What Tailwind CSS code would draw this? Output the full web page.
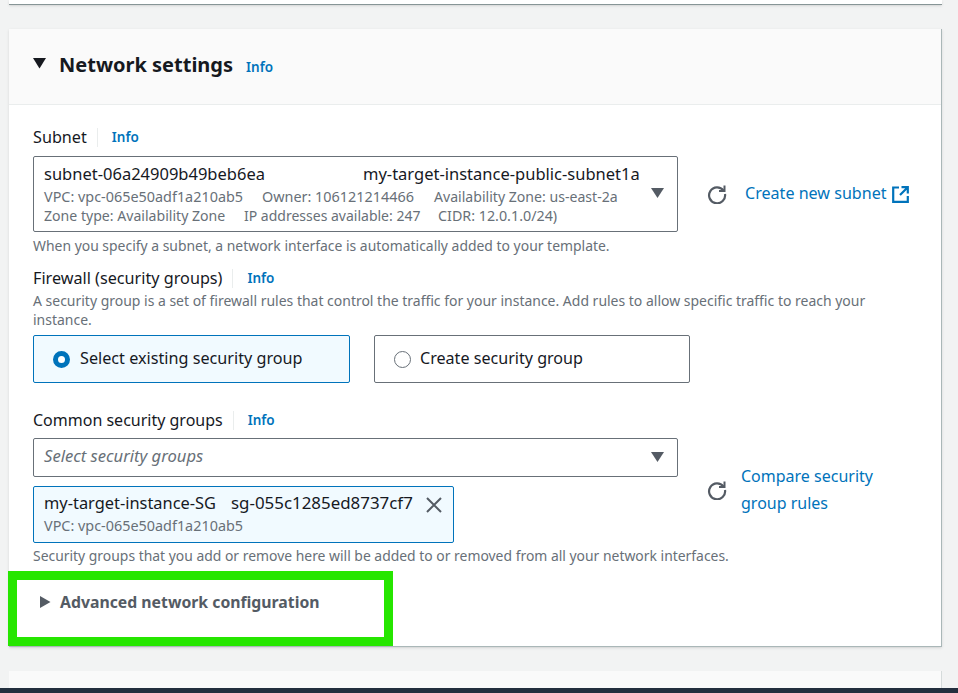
<!DOCTYPE html>
<html lang="en">
<head>
  <meta charset="UTF-8" />
  <title>Network settings</title>
  <script src="https://cdn.jsdelivr.net/npm/@tailwindcss/browser@4"></script>
</head>
<body class="bg-[#f2f3f3] font-['Noto_Sans',sans-serif] text-[#16191f]">
<div class="relative h-[693px] overflow-hidden">

  <!-- Previous card -->
  <div class="mx-[9px] w-[933px] h-[5px] bg-white border-b border-[#879596] shadow-sm"></div>

  <!-- Network settings card -->
  <section class="mx-[9px] mt-[24px] w-[933px] h-[618px] bg-white border-r border-b border-[#aab7b8] shadow-sm">
    <header class="h-[76px] bg-[#fafafa] border-b border-[#eaeded] pl-[24px] pt-[20px] flex items-start">
      <svg class="mt-[9px]" width="13" height="11" viewBox="0 0 13 11"><path d="M0 0h13L6.500 10.500z" fill="#16191f"/></svg>
      <h2 class="ml-[13px] text-[20px] leading-[32px] font-bold">Network settings</h2>
      <a class="ml-[13px] mt-[6px] text-[13.500px] leading-[24px] font-semibold text-[#0073bb]">Info</a>
    </header>

    <div class="pl-[24px] pt-[20px]">
      <!-- Subnet -->
      <div class="flex items-center h-[24px]">
        <span class="text-[16.200px] leading-[24px]">Subnet</span>
        <span class="ml-[10px] h-[19px] border-l border-[#eaeded]"></span>
        <a class="ml-[14px] text-[13.500px] font-semibold text-[#0073bb]">Info</a>
      </div>
      <div class="flex items-center mt-[7px]">
        <div class="relative w-[645px] h-[76px] border border-[#687078] rounded-[2px] pl-[10px] pt-[5px]">
          <div class="flex text-[16.500px] leading-[24px] whitespace-nowrap"><span class="w-[319px]">subnet-06a24909b49beb6ea</span><span>my-target-instance-public-subnet1a</span></div>
          <div class="flex mt-[1px] text-[14.400px] leading-[19px] text-[#687078] whitespace-nowrap"><span class="w-[218px]">VPC: vpc-065e50adf1a210ab5</span><span class="w-[172px]">Owner: 106121214466</span><span class="text-[14.100px]">Availability Zone: us-east-2a</span></div>
          <div class="flex text-[14.100px] leading-[19px] text-[#687078] whitespace-nowrap"><span class="w-[200px]">Zone type: Availability Zone</span><span class="w-[194px] text-[14px]">IP addresses available: 247</span><span class="text-[14.300px]">CIDR: 12.0.1.0/24)</span></div>
          <svg class="absolute right-[13px] top-[31px]" width="13" height="10" viewBox="0 0 13 10"><path d="M0 0h13L6.500 10z" fill="#545b64"/></svg>
        </div>
        <svg class="ml-[29px]" width="20" height="20" viewBox="0 0 20 20" fill="none" stroke="#545b64" stroke-width="2.200"><path d="M16.500 6.500A8 8 0 1 0 18 10"/><path d="M17.500 1.500v5.500H12" stroke-width="2"/></svg>
        <a class="ml-[18px] mb-[2px] text-[16.100px] text-[#0073bb]">Create new subnet</a>
        <svg class="ml-[5px]" width="17" height="17" viewBox="0 0 17 17" fill="none" stroke="#0073bb" stroke-width="2.200"><path d="M7 1.500H1.200v14.300h14.600V10"/><path d="M9.500 1.200h6.300v6.300M15.500 1.500 8 9"/></svg>
      </div>
      <p class="mt-[4px] text-[13.930px] leading-[19px] text-[#687078]">When you specify a subnet, a network interface is automatically added to your template.</p>

      <!-- Firewall -->
      <div class="flex items-center h-[24px] mt-[11px]">
        <span class="text-[16.200px] leading-[24px]">Firewall (security groups)</span>
        <span class="ml-[10px] h-[19px] border-l border-[#eaeded]"></span>
        <a class="ml-[14px] text-[13.500px] font-semibold text-[#0073bb]">Info</a>
      </div>
      <p class="mt-[1px] w-[860px] text-[13.980px] leading-[19px] text-[#687078]">A security group is a set of firewall rules that control the traffic for your instance. Add rules to allow specific traffic to reach your instance.</p>
      <div class="flex gap-[24px] mt-[6px]">
        <div class="w-[317px] h-[48px] border border-[#0073bb] bg-[#f1faff] rounded-[2px] flex items-center pl-[19px]">
          <span class="w-[17px] h-[17px] rounded-full border-[5px] border-[#0073bb] bg-white"></span>
          <span class="ml-[10px] mb-[2px] text-[16.200px]">Select existing security group</span>
        </div>
        <div class="w-[316px] h-[48px] border border-[#687078] rounded-[2px] flex items-center pl-[19px]">
          <span class="w-[17px] h-[17px] rounded-full border border-[#687078] bg-white"></span>
          <span class="ml-[9px] mb-[2px] text-[16.100px]">Create security group</span>
        </div>
      </div>

      <!-- Common security groups -->
      <div class="flex items-center h-[24px] mt-[25px]">
        <span class="text-[16px] leading-[24px]">Common security groups</span>
        <span class="ml-[10px] h-[19px] border-l border-[#eaeded]"></span>
        <a class="ml-[14px] text-[13.500px] font-semibold text-[#0073bb]">Info</a>
      </div>
      <div class="flex mt-[6px]">
        <div class="w-[645px]">
          <div class="relative h-[39px] border border-[#687078] rounded-[2px] pl-[10px] pb-[2px] flex items-center">
            <span class="text-[16.600px] italic text-[#687078]">Select security groups</span>
            <svg class="absolute right-[13px] top-[13px]" width="13" height="10" viewBox="0 0 13 10"><path d="M0 0h13L6.500 10z" fill="#545b64"/></svg>
          </div>
          <div class="relative mt-[9px] w-[421px] h-[57px] border border-[#0073bb] bg-[#f1faff] rounded-[2px] pl-[10px] pt-[4px]">
            <div class="flex text-[16.400px] leading-[24px] whitespace-nowrap"><span class="w-[187px]">my-target-instance-SG</span><span class="text-[16.900px]">sg-055c1285ed8737cf7</span></div>
            <div class="mt-[1px] text-[14.400px] leading-[19px] text-[#687078]">VPC: vpc-065e50adf1a210ab5</div>
            <svg class="absolute right-[11px] top-[10px]" width="16" height="16" viewBox="0 0 16 16" stroke="#545b64" stroke-width="2" fill="none"><path d="M1 1l14 14M15 1 1 15"/></svg>
          </div>
        </div>
        <div class="flex items-center ml-[29px] h-[104px]">
          <svg width="20" height="20" viewBox="0 0 20 20" fill="none" stroke="#545b64" stroke-width="2.200"><path d="M16.500 6.500A8 8 0 1 0 18 10"/><path d="M17.500 1.500v5.500H12" stroke-width="2"/></svg>
          <a class="ml-[14px] w-[150px] text-[16px] leading-[27px] text-[#0073bb]">Compare security group rules</a>
        </div>
      </div>
      <p class="mt-[3px] text-[13.920px] leading-[19px] text-[#687078]">Security groups that you add or remove here will be added to or removed from all your network interfaces.</p>
    </div>
  </section>

  <!-- Next card -->
  <div class="mx-[9px] mt-[24px] w-[933px] h-[30px] bg-[#fafafa] border-r border-[#d5dbdb]"></div>

  <!-- Green annotation -->
  <div class="absolute left-[8px] top-[571px] w-[385px] h-[75px] border-[9px] border-[#26e600] bg-white">
    <div class="flex items-center mt-[10px] ml-[23px]">
      <svg width="11" height="12" viewBox="0 0 11 12"><path d="M0 0v12l10.500-6z" fill="#545b64"/></svg>
      <span class="ml-[9px] text-[15.800px] leading-[24px] font-bold text-[#545b64]">Advanced network configuration</span>
    </div>
  </div>

  <!-- Bottom bar -->
  <div class="absolute left-0 bottom-0 w-full h-[5px] bg-[#232f3e]"></div>
</div>
</body>
</html>
